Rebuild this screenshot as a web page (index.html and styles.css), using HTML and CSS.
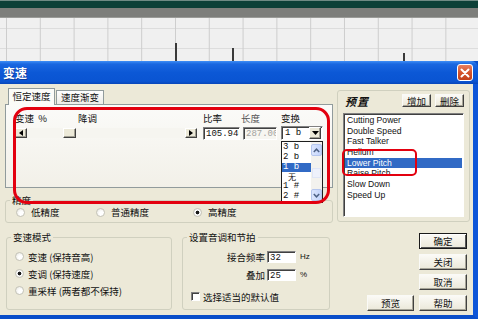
FILE: index.html
```html
<!DOCTYPE html>
<html lang="zh-CN">
<head>
    <meta charset="UTF-8">
    <title>变速</title>
    <link rel="stylesheet" href="styles.css">
</head>
<body>
    <div class="desk-top"></div>
    <div class="desk-bar"></div>
    <div class="wave">
        <span class="spike spike-a"></span>
        <span class="spike spike-b"></span>
        <span class="spike spike-c"></span>
    </div>

    <div class="dialog">
        <div class="titlebar">
            <span class="title">变速</span>
            <span class="close">
                <svg width="10" height="10" viewBox="0 0 10 10"><path d="M1.5 1.5 L8.5 8.5 M8.5 1.5 L1.5 8.5" stroke="#fff" stroke-width="2" stroke-linecap="round"/></svg>
            </span>
        </div>

        <div class="dlg-body">
            <div class="left">
                <div class="tabs">
                    <span class="tab active">恒定速度</span>
                    <span class="tab">速度渐变</span>
                </div>
                <div class="panel">
                    <div class="row labels">
                        <span class="w-speed">变速&nbsp;&nbsp;%</span>
                        <span class="w-pitch">降调</span>
                        <span class="w-ratio">比率</span>
                        <span class="w-len">长度</span>
                        <span>变换</span>
                    </div>
                    <div class="row controls">
                        <div class="slider">
                            <span class="sbtn"><svg width="4" height="6" viewBox="0 0 4 6"><path d="M4 0 L0 3 L4 6 Z" fill="#000"/></svg></span>
                            <span class="track"><span class="thumb"></span></span>
                            <span class="sbtn"><svg width="4" height="6" viewBox="0 0 4 6"><path d="M0 0 L4 3 L0 6 Z" fill="#000"/></svg></span>
                        </div>
                        <span class="field ratio">105.946</span>
                        <span class="field length">287.001</span>
                        <span class="combo">
                            <span class="combo-text">1 b</span>
                            <span class="combo-btn"><svg width="7" height="4" viewBox="0 0 7 4"><path d="M0 0 L7 0 L3.5 4 Z" fill="#000"/></svg></span>
                        </span>
                    </div>
                    <div class="droplist">
                        <ul class="drop-items">
                            <li>3 b</li>
                            <li>2 b</li>
                            <li class="sel">1 b</li>
                            <li class="cjk">无</li>
                            <li>1 #</li>
                            <li>2 #</li>
                        </ul>
                        <div class="vscroll">
                            <span class="vbtn"><svg width="7" height="5" viewBox="0 0 7 5"><path d="M0.8 4 L3.5 1.2 L6.2 4" fill="none" stroke="#4d6185" stroke-width="1.5"/></svg></span>
                            <span class="vthumb"></span>
                            <span class="vbtn"><svg width="7" height="5" viewBox="0 0 7 5"><path d="M0.8 1 L3.5 3.8 L6.2 1" fill="none" stroke="#4d6185" stroke-width="1.5"/></svg></span>
                        </div>
                    </div>
                </div>

                <fieldset class="group precision">
                    <legend>精度</legend>
                    <div class="radio-row">
                        <label class="opt w80"><span class="radio"></span>低精度</label>
                        <label class="opt w97"><span class="radio"></span>普通精度</label>
                        <label class="opt"><span class="radio on"></span>高精度</label>
                    </div>
                </fieldset>

                <div class="bottom-groups">
                    <fieldset class="group mode">
                        <legend>变速模式</legend>
                        <div class="radio-col">
                            <label class="opt"><span class="radio"></span>变速 (保持音高)</label>
                            <label class="opt"><span class="radio on"></span>变调 (保持速度)</label>
                            <label class="opt"><span class="radio"></span>重采样 (两者都不保持)</label>
                        </div>
                    </fieldset>
                    <fieldset class="group pitch">
                        <legend>设置音调和节拍</legend>
                        <div class="pitch-body">
                            <div class="prow">
                                <span class="plabel">接合频率</span>
                                <span class="field small">32</span>
                                <span class="unit">Hz</span>
                            </div>
                            <div class="prow">
                                <span class="plabel">叠加</span>
                                <span class="field small">25</span>
                                <span class="unit">%</span>
                            </div>
                            <label class="check-row"><span class="check"></span>选择适当的默认值</label>
                        </div>
                    </fieldset>
                </div>
            </div>

            <div class="right">
                <div class="presets">
                    <div class="presets-head">
                        <span class="presets-title">预置</span>
                        <span class="btn small">增加</span>
                        <span class="btn small">删除</span>
                    </div>
                    <ul class="listbox">
                        <li>Cutting Power</li>
                        <li>Double Speed</li>
                        <li>Fast Talker</li>
                        <li>Helium</li>
                        <li class="sel">Lower Pitch</li>
                        <li>Raise Pitch</li>
                        <li>Slow Down</li>
                        <li>Speed Up</li>
                    </ul>
                </div>
                <div class="actions">
                    <span class="btn default main">确定</span>
                    <span class="btn main">关闭</span>
                    <span class="btn main">取消</span>
                    <span class="btn preview">预览</span>
                    <span class="btn main">帮助</span>
                </div>
            </div>

            <span class="mark mark-tab"></span>
            <span class="mark mark-item"></span>
        </div>
    </div>
</body>
</html>
```

FILE: styles.css
```css
* {
    box-sizing: border-box;
}
body {
    margin: 0;
    width: 478px;
    height: 319px;
    overflow: hidden;
    font-family: "Noto Sans CJK SC", sans-serif;
    font-size: 9.5px;
    line-height: 10px;
    color: #111;
    background: #0a4ec9;
}
ul {
    list-style: none;
    margin: 0;
    padding: 0;
}

/* desktop behind the dialog */
.desk-top {
    height: 8px;
    background: #0d4038;
    border-top: 1px solid #6f8a84;
}
.desk-bar {
    height: 10px;
    background: #7d7e7b;
    border-bottom: 1px solid #9a9b98;
}
.wave {
    position: relative;
    height: 43px;
    background:
        linear-gradient(to right, #cdcdcd 1px, transparent 1px) 6px 0 / 33.8px 100%,
        linear-gradient(to bottom, #dddddd 1px, transparent 1px) 0 10px / 100% 20px,
        #f0f0f0;
}
.spike {
    position: absolute;
    width: 2px;
    background: #3a3a3a;
}
.spike-a { left: 175px; top: 25px; height: 18px; }
.spike-b { left: 232px; top: 30px; height: 13px; }
.spike-c { left: 403px; top: 35px; height: 8px; }

/* dialog frame */
.dialog {
    height: 258px;
}
.titlebar {
    height: 23px;
    display: flex;
    align-items: center;
    justify-content: space-between;
    padding: 0 5px 0 3px;
    border-radius: 0 7px 0 0;
    background: linear-gradient(#3f8ff6 0, #1a67e0 3px, #0c58d6 50%, #0a54d2 88%, #0846b9 100%);
}
.title {
    color: #fff;
    font-weight: bold;
    font-size: 12px;
    line-height: 14px;
    text-shadow: 1px 1px 0 #0a3a9a;
}
.close {
    width: 16px;
    height: 17px;
    display: flex;
    align-items: center;
    justify-content: center;
    border: 1px solid #fff;
    border-radius: 3px;
    background: linear-gradient(#e98061, #d4542c 50%, #c2401a);
}
.dlg-body {
    position: relative;
    height: 235px;
    display: grid;
    grid-template-columns: 328px 133px;
    column-gap: 4px;
    align-items: start;
    padding: 4px 0 0 5px;
    background: #ece9d8;
    border-right: 5px solid #0d55d8;
    border-bottom: 4px solid #0a4ec9;
}

/* tabs */
.tabs {
    display: flex;
    align-items: flex-end;
    height: 17px;
    padding-left: 3px;
}
.tab {
    width: 48px;
    height: 15px;
    text-align: center;
    line-height: 13px;
    border: 1px solid #919b9c;
    border-bottom: none;
    background: linear-gradient(#fefefe, #ecebe6);
    margin-left: 1px;
}
.tab.active {
    width: 47px;
    height: 17px;
    line-height: 15px;
    margin-left: 0;
    position: relative;
    z-index: 1;
    background: #fbfbf8;
}
.panel {
    position: relative;
    height: 84px;
    margin-top: -1px;
    padding: 8px 0 0 9px;
    border: 1px solid #919b9c;
    background: linear-gradient(#fbfbf9, #f2f0e8);
}
.row {
    display: flex;
    align-items: center;
}
.labels span {
    display: block;
}
.w-speed { width: 63px; }
.w-pitch { width: 125px; }
.w-ratio { width: 38px; }
.w-len { width: 40px; color: #555; }
.controls {
    margin-top: 3px;
    height: 14px;
}

/* slider */
.slider {
    width: 182px;
    height: 10px;
    margin-right: 6px;
    display: flex;
}
.sbtn, .thumb, .combo-btn {
    display: flex;
    align-items: center;
    justify-content: center;
    background: #ece9d8;
    border: 1px solid;
    border-color: #fff #404040 #404040 #fff;
    box-shadow: inset -1px -1px 0 #a09e92;
}
.sbtn {
    width: 12px;
    height: 10px;
}
.track {
    flex: 1;
    height: 10px;
    display: flex;
    background: #f6f5f0;
}
.thumb {
    width: 13px;
    height: 10px;
    margin-left: 36px;
}

/* sunken fields */
.field, .combo, .listbox, .check {
    background: #fff;
    border: 1px solid;
    border-color: #808080 #fff #fff #808080;
    box-shadow: inset 1px 1px 0 #404040;
}
.field {
    height: 13px;
    padding: 1px 0 0 2px;
    overflow: hidden;
    white-space: nowrap;
    font-family: "Liberation Mono", monospace;
    font-size: 9px;
    line-height: 11px;
}
.ratio {
    width: 37px;
    margin-right: 3px;
}
.length {
    width: 34px;
    margin-right: 4px;
    color: #a3a3a0;
    background: #f7f6f1;
}
.combo {
    width: 42px;
    height: 14px;
    display: flex;
    padding: 1px;
}
.combo-text {
    flex: 1;
    padding-left: 2px;
    font-family: "Liberation Mono", monospace;
    font-size: 9px;
    line-height: 11px;
}
.combo-btn {
    width: 12px;
    height: 12px;
    margin-top: -1px;
}

/* open drop-down list */
.droplist {
    position: absolute;
    left: 275px;
    top: 36px;
    width: 42px;
    height: 62px;
    z-index: 2;
    display: flex;
    background: #fff;
    border: 1px solid #1e1e1e;
}
.drop-items {
    flex: 1;
    padding-top: 1px;
    font-family: "Liberation Mono", monospace;
    font-size: 9px;
}
.drop-items li {
    height: 9.8px;
    line-height: 9.8px;
    padding-left: 1px;
    overflow: hidden;
}
.drop-items .cjk {
    font-family: "Noto Sans CJK SC", sans-serif;
    font-size: 8px;
    line-height: 9.8px;
    padding-left: 6px;
    overflow: visible;
}
.drop-items .sel {
    background: #316ac5;
    color: #fff;
}
.vscroll {
    width: 11px;
    display: flex;
    flex-direction: column;
    justify-content: space-between;
    padding: 2px 0 1px;
    background: #f3f2ee;
}
.vbtn {
    height: 12px;
    display: flex;
    align-items: center;
    justify-content: center;
    border: 1px solid #b5c6ee;
    border-radius: 2px;
    background: linear-gradient(to right, #dce6fd, #c2d3fb);
}
.vthumb {
    height: 10px;
    margin: 0 1px;
    border: 1px solid #e0e6f6;
    background: #eef1fb;
}

/* group boxes */
.group {
    margin: 0;
    padding: 0;
    min-width: 0;
    border: 1px solid #d0d0bf;
    border-radius: 3px;
}
.group legend {
    margin-left: 4px;
    padding: 0 2px;
    line-height: 10px;
}
.precision {
    margin-top: 7px;
}
.radio-row {
    display: flex;
    align-items: center;
    height: 14px;
    margin-bottom: 3px;
    padding-left: 10px;
}
.opt {
    display: flex;
    align-items: center;
}
.w80 { width: 80px; }
.w97 { width: 97px; }
.radio {
    width: 9px;
    height: 9px;
    margin-right: 6px;
    border: 1px solid #c4c3b8;
    border-radius: 50%;
    background: radial-gradient(circle at 65% 65%, #fff 30%, #e6e5de 100%);
}
.radio.on {
    background: radial-gradient(circle, #1a1a1a 0, #1a1a1a 1.6px, #fff 2.2px, #e8e7e0 100%);
}
.bottom-groups {
    display: flex;
    align-items: stretch;
    margin-top: 9px;
}
.mode {
    width: 166px;
    margin-left: 1px;
}
.radio-col {
    padding: 6px 0 10px 8px;
}
.radio-col .opt {
    height: 17px;
}
.radio-col .radio {
    margin-right: 4px;
}
.pitch {
    width: 148px;
    margin-left: 10px;
}
.pitch-body {
    padding: 9px 0 1px 0;
}
.prow {
    display: flex;
    align-items: center;
    height: 12px;
    margin-bottom: 6px;
}
.plabel {
    width: 82px;
    text-align: right;
    margin-right: 2px;
}
.field.small {
    width: 29px;
    height: 12px;
    font-size: 9px;
    line-height: 10px;
    margin-right: 4px;
}
.unit {
    font-family: "Liberation Sans", sans-serif;
    font-size: 8px;
}
.check-row {
    display: flex;
    align-items: center;
    height: 11px;
    margin-top: 10px;
    padding-left: 8px;
}
.check {
    width: 9px;
    height: 9px;
    margin-right: 3px;
}

/* presets */
.presets {
    margin-top: 2px;
    height: 132px;
    border: 1px solid #d0d0bf;
    border-radius: 3px;
}
.presets-head {
    display: flex;
    align-items: center;
    gap: 4px;
    height: 13px;
    margin-top: 3px;
    padding: 0 5px 0 7px;
}
.presets-title {
    margin-right: auto;
    font-size: 11px;
    font-weight: bold;
    font-style: italic;
    letter-spacing: 1px;
}
.listbox {
    width: 121px;
    height: 104px;
    margin: 6px 0 0 5px;
    padding: 1px 1px 0 1px;
    font-family: "Liberation Sans", sans-serif;
    font-size: 8.6px;
}
.listbox li {
    height: 10.7px;
    line-height: 10.7px;
    padding-left: 2px;
    white-space: nowrap;
}
.listbox .sel {
    background: #316ac5;
    color: #fff;
}

/* buttons */
.btn {
    display: flex;
    align-items: center;
    justify-content: center;
    background: linear-gradient(#fbfaf6, #ebe8d9);
    border: 1px solid;
    border-color: #fafaf7 #404040 #404040 #fafaf7;
    box-shadow: inset -1px -1px 0 #a6a497;
}
.btn.small {
    width: 29px;
    height: 13px;
}
.actions {
    display: grid;
    grid-template-columns: 47px 48px;
    grid-auto-rows: 16.3px;
    gap: 4.3px 5px;
    justify-content: end;
    margin-top: 11px;
    padding-right: 3px;
}
.btn.main {
    grid-column: 2;
}
.btn.preview {
    grid-column: 1;
    grid-row: 4;
}
.btn.default {
    border-color: #1a1a1a;
    box-shadow: inset 1px 1px 0 #fff, inset -1px -1px 0 #555;
}

/* red annotation marks */
.mark {
    position: absolute;
    z-index: 3;
    border: 3px solid #e3000f;
}
.mark-tab {
    left: 13px;
    top: 23px;
    width: 317px;
    height: 97px;
    border-radius: 14px;
}
.mark-item {
    left: 342px;
    top: 65px;
    width: 75px;
    height: 27px;
    border-width: 2.5px;
    border-radius: 5px;
}
```
